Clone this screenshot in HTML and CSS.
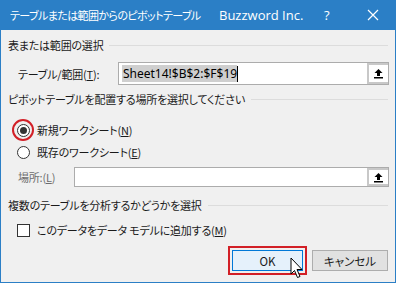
FILE: index.html
```html
<!DOCTYPE html>
<html lang="ja">
<head>
<meta charset="utf-8">
<link rel="stylesheet" href="styles.css">
</head>
<body>
<div class="window">
  <div class="titlebar">
    <span class="title">テーブルまたは範囲からのピボットテーブル</span>
    <span class="brand">Buzzword Inc.</span>
    <span class="help">?</span>
    <span class="close"><svg width="12" height="12" viewBox="0 0 12 12"><path d="M1 1L11 11M11 1L1 11" stroke="#fff" stroke-width="1.2"/></svg></span>
  </div>
  <div class="content">
    <div class="group g1"><span>表または範囲の選択</span><span class="rule"></span></div>
    <div class="row r-range">
      <span class="label lbl-range">テーブル/範囲(<u>T</u>):</span>
      <div class="input">
        <span class="value"><span class="sel">Sheet14!$B$2:$F$19</span><span class="caret"></span></span>
        <span class="pick"><svg width="11" height="11" viewBox="0 0 11 11"><path d="M5.5 1L1.5 5H4V8H7V5H9.5Z" fill="#000"/><rect x="1" y="9" width="9" height="1.5" fill="#000"/></svg></span>
      </div>
    </div>
    <div class="group g2"><span>ピボットテーブルを配置する場所を選択してください</span><span class="rule"></span></div>
    <div class="row radio-row r1">
      <span class="radio-wrap hl"><span class="radio checked"></span></span>
      <span>新規ワークシート(<u>N</u>)</span>
    </div>
    <div class="row radio-row r2">
      <span class="radio-wrap"><span class="radio"></span></span>
      <span>既存のワークシート(<u>E</u>)</span>
    </div>
    <div class="row r-loc">
      <span class="label lbl-loc disabled">場所:(<u>L</u>)</span>
      <div class="input small">
        <span class="value"></span>
        <span class="pick"><svg width="11" height="11" viewBox="0 0 11 11"><path d="M5.5 1L1.5 5H4V8H7V5H9.5Z" fill="#000"/><rect x="1" y="9" width="9" height="1.5" fill="#000"/></svg></span>
      </div>
    </div>
    <div class="group g3"><span>複数のテーブルを分析するかどうかを選択</span><span class="rule"></span></div>
    <div class="row check-row">
      <span class="checkbox"></span>
      <span>このデータをデータ モデルに追加する(<u>M</u>)</span>
    </div>
    <div class="buttons">
      <span class="btn-hl"><button class="btn ok">OK</button></span>
      <button class="btn cancel">キャンセル</button>
    </div>
  </div>
  <svg class="cursor" width="14" height="22" viewBox="0 0 14 22"><path d="M1 1V17L4.5 13.5L7.5 20.5L10 19.5L7 12.5H12Z" fill="#fff" stroke="#000" stroke-width="1"/></svg>
</div>
</body>
</html>
```
FILE: styles.css
```css
* { box-sizing: border-box; }
html, body { margin: 0; padding: 0; }
body {
  width: 396px;
  height: 283px;
  overflow: hidden;
  font-family: "Noto Sans CJK JP", "Noto Sans", sans-serif;
  font-size: 11px;
  letter-spacing: -0.2px;
  color: #1a1a1a;
  font-feature-settings: "palt";
}
.window {
  position: relative;
  width: 396px;
  height: 283px;
  background: #f0f0f0;
  border: 1px solid #2b7fc6;
  border-top: none;
  display: flex;
  flex-direction: column;
}
.titlebar {
  height: 30px;
  background: #2b7fc6;
  color: #fff;
  display: flex;
  align-items: center;
  padding-left: 10px;
  margin: 0 -1px;
  flex: none;
  white-space: nowrap;
  letter-spacing: 0;
}
.title { font-size: 11px; letter-spacing: -0.6px; width: 209px; flex: none; overflow: hidden; }
.brand {
  font-family: "Open Sans", "Noto Sans", sans-serif;
  font-size: 13px;
  width: 105px;
  flex: none;
}
.help {
  font-family: "Open Sans", sans-serif;
  font-size: 13px;
  width: 43px;
  flex: none;
}
.close { display: flex; flex: none; }
.content {
  padding: 0 6px 0 7px;
  display: flex;
  flex-direction: column;
}
.group {
  display: flex;
  align-items: center;
  height: 16px;
  line-height: 16px;
}
.group .rule {
  flex: 1;
  border-top: 1px solid #dcdcdc;
  margin-left: 6px;
  margin-right: 1px;
}
.g1 { margin-top: 7px; }
.g2 { margin-top: 6px; }
.g3 { margin-top: 10px; }
.row { display: flex; align-items: center; }
.label { padding-left: 10px; flex: none; }
.lbl-range { width: 110px; }
.lbl-loc { width: 66px; }
.disabled { color: #6d6d6d; }
.r-range { margin-top: 9px; height: 23px; }
.input {
  flex: 1;
  height: 23px;
  background: #fff;
  border: 1px solid #acacac;
  display: flex;
  align-items: center;
  justify-content: space-between;
}
.input.small { height: 20px; }
.value {
  display: flex;
  align-items: center;
  padding-left: 3px;
  font-family: "Noto Sans", sans-serif;
  font-size: 12px;
  letter-spacing: 0;
  font-feature-settings: normal;
}
.sel { background: #cfcfcf; color: #000; padding: 0 0 0 1px; line-height: 17px; }
.caret { width: 1px; height: 16px; background: #000; }
.pick {
  width: 21px;
  height: 100%;
  border: 2px solid #c8c8c8;
  border-right: none;
  background: #fff;
  display: flex;
  align-items: center;
  justify-content: center;
}
.radio-row { height: 20px; padding-left: 8px; gap: 7px; }
.r1 { margin-top: 13px; }
.r2 { margin-top: 2px; }
.radio-wrap {
  width: 14px;
  height: 14px;
  display: flex;
  align-items: center;
  justify-content: center;
  position: relative;
}
.radio-wrap.hl::after {
  content: "";
  position: absolute;
  left: -4px;
  top: -4px;
  width: 18px;
  height: 18px;
  border: 2px solid #d21f26;
  border-radius: 50%;
}
.radio {
  width: 13px;
  height: 13px;
  border: 1px solid #333;
  border-radius: 50%;
  background: #fff;
  display: flex;
  align-items: center;
  justify-content: center;
}
.radio.checked::before {
  content: "";
  width: 7px;
  height: 7px;
  border-radius: 50%;
  background: #333;
}
.r-loc { margin-top: 5px; height: 20px; }
.check-row { margin-top: 7px; height: 20px; padding-left: 9px; gap: 7px; }
.checkbox {
  width: 13px;
  height: 13px;
  border: 1px solid #333;
  background: #fff;
}
.buttons {
  margin-top: 6px;
  display: flex;
  justify-content: flex-end;
  align-items: center;
  gap: 5px;
  padding-right: 1px;
}
.btn-hl {
  border: 2px solid #d21f26;
  padding: 2px;
  display: flex;
}
.btn {
  font-family: "Noto Sans CJK JP", sans-serif;
  font-size: 11.5px;
  font-feature-settings: "palt";
  height: 21px;
  width: 71px;
  padding: 0;
  color: #1a1a1a;
  cursor: default;
}
.ok {
  background: #e5f1fb;
  border: 1px solid #0078d7;
  box-shadow: inset 0 0 0 1px #e5f1fb;
}
.cancel {
  width: 76px;
  background: #e1e1e1;
  border: 1px solid #adadad;
}
.cursor {
  position: absolute;
  left: 289px;
  top: 257px;
}
```
